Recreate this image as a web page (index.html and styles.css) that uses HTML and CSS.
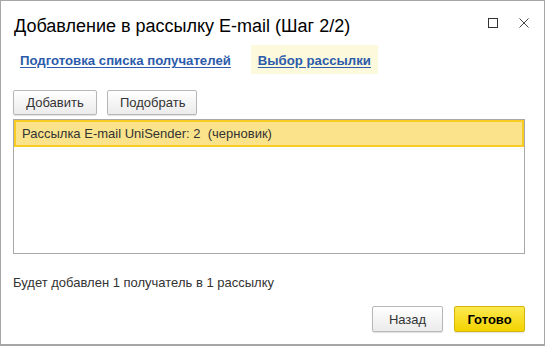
FILE: index.html
```html
<!DOCTYPE html>
<html>
<head>
    <meta charset="utf-8">
    <title>Добавление в рассылку E-mail</title>
    <link rel="stylesheet" href="styles.css">
</head>
<body>
    <div class="window">
        <div class="title-bar">
            <div class="title">Добавление в рассылку E-mail (Шаг 2/2)</div>
            <div class="win-controls">
                <svg width="10" height="10" viewBox="0 0 10 10"><rect x="0.5" y="0.5" width="9" height="9" fill="none" stroke="#333" stroke-width="1"/></svg>
                <svg width="10" height="10" viewBox="0 0 10 10"><path d="M0.5 0.5 L9.5 9.5 M9.5 0.5 L0.5 9.5" stroke="#444" stroke-width="1"/></svg>
            </div>
        </div>

        <!-- Steps -->
        <div class="steps">
            <a class="step" href="#">Подготовка списка получателей</a>
            <a class="step current" href="#">Выбор рассылки</a>
        </div>

        <div class="toolbar">
            <button class="btn">Добавить</button>
            <button class="btn">Подобрать</button>
        </div>

        <div class="list">
            <div class="row selected">Рассылка E-mail UniSender: 2&nbsp; (черновик)</div>
        </div>

        <p class="summary">Будет добавлен 1 получатель в 1 рассылку</p>

        <div class="footer">
            <button class="btn wide">Назад</button>
            <button class="btn wide primary">Готово</button>
        </div>
    </div>
</body>
</html>
```

FILE: styles.css
```css
body {
    margin: 0;
    padding: 0;
    background-color: #fff;
    font-family: "Liberation Sans", Arial, sans-serif;
    font-size: 13px;
    color: #333;
}
.window {
    width: 545px;
    height: 346px;
    box-sizing: border-box;
    border: 1px solid #a6a6a6;
    border-bottom-width: 2px;
    background-color: #fff;
    padding: 0 19px 0 12px;
}
.title-bar {
    display: flex;
    align-items: center;
    justify-content: space-between;
    padding-top: 11px;
    height: 29px;
}
.title {
    font-size: 18px;
    line-height: 20px;
    color: #000;
    margin-top: -2px;
    margin-left: 1px;
}
.win-controls {
    display: flex;
    gap: 21px;
    margin-top: -8px;
    margin-right: -4px;
}
.steps {
    display: flex;
    gap: 13px;
    margin-top: 4px;
}
.step {
    font-size: 13.2px;
    font-weight: bold;
    color: #2c5bab;
    text-decoration: underline;
    text-underline-offset: 2px;
    line-height: 15px;
    padding: 8px 7px 6px;
}
.step.current {
    background-color: #fdf9dc;
}
.toolbar {
    display: flex;
    gap: 10px;
    margin-top: 16px;
}
.btn {
    font-family: "Liberation Sans", Arial, sans-serif;
    font-size: 13px;
    color: #333;
    height: 25px;
    padding: 0 12px;
    border: 1px solid #b8b8b8;
    border-radius: 2px;
    background: linear-gradient(#ffffff, #ebebeb);
    box-shadow: 0 1px 1px rgba(0, 0, 0, 0.12);
    cursor: pointer;
}
.toolbar .btn:first-child {
    width: 84px;
}
.toolbar .btn:last-child {
    width: 90px;
}
.list {
    margin-top: 4px;
    height: 135px;
    box-sizing: border-box;
    border: 1px solid #a8a8a8;
}
.row {
    height: 27px;
    box-sizing: border-box;
    line-height: 23px;
    padding-left: 6px;
}
.row.selected {
    background-color: #fbe38c;
    border: 2px solid #f8cc25;
    color: #333;
}
.summary {
    margin: 21px 0 0;
    line-height: 15px;
}
.footer {
    display: flex;
    justify-content: flex-end;
    gap: 11px;
    margin-top: 16px;
}
.btn.wide {
    width: 71px;
    height: 26px;
}
.btn.primary {
    background: linear-gradient(#fce94f, #f4d300);
    border-color: #d5b60a;
    color: #000;
    font-weight: bold;
}
```
